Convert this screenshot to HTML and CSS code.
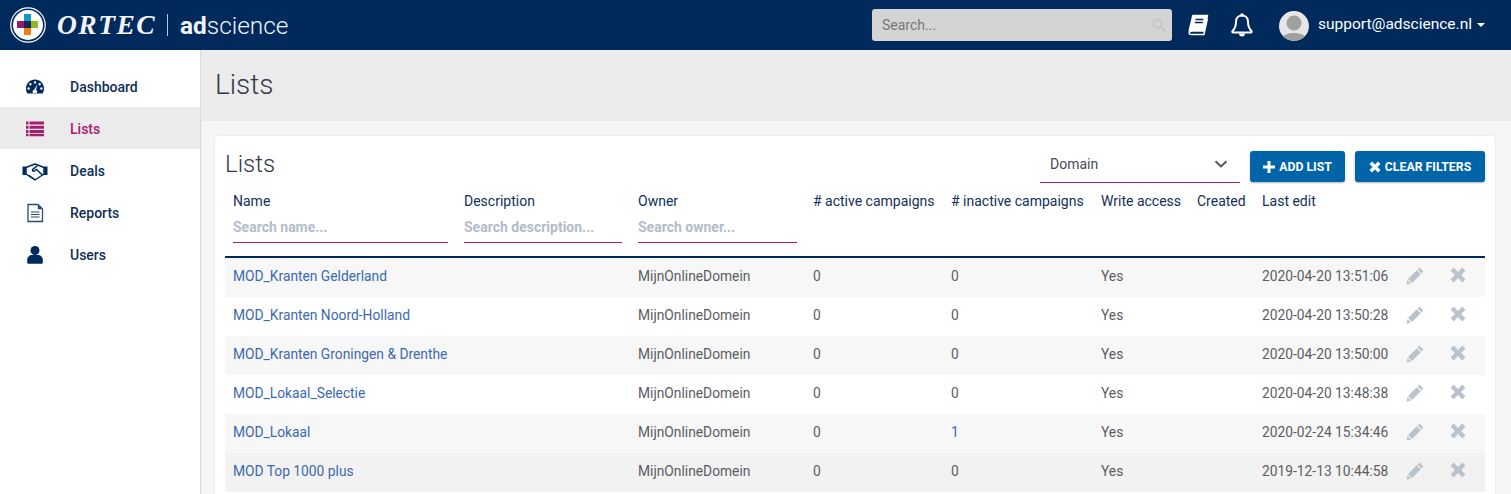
FILE: index.html
```html
<!DOCTYPE html>
<html lang="en">
<head>
<meta charset="utf-8">
<title>Lists</title>
<link rel="stylesheet" href="styles.css">
</head>
<body>
<svg class="sprites" aria-hidden="true">
  <symbol id="i-pencil" viewBox="0 0 18 18"><path d="M12.700 1.500l3.800 3.800-1.700 1.700L11 3.200zM10.200 4l3.800 3.800-8.300 8.300-3.800-3.800z" fill="#b9c3cb"/><path d="M1.400 13.200l3.400 3.400-4.300 1z" fill="#b9c3cb"/></symbol>
  <symbol id="i-cross" viewBox="0 0 14 14"><path d="M.5 3.200 3.200.5 7 4.300 10.800.5l2.700 2.700L9.700 7l3.800 3.800-2.700 2.700L7 9.700l-3.800 3.800-2.700-2.700L4.300 7z" fill="#b9c3cb"/></symbol>
</svg>
<header class="topbar">
  <div class="brand">
    <svg class="brand-mark" viewBox="0 0 36 36" width="36" height="36" aria-hidden="true">
      <circle cx="18" cy="18" r="17.200" fill="none" stroke="#fff" stroke-width="1.200"/>
      <circle cx="18" cy="18" r="15" fill="#fff"/>
      <rect x="14" y="7" width="7" height="7" fill="#1797c4"/>
      <rect x="7" y="14" width="7" height="7" fill="#9b1a70"/>
      <rect x="14" y="14" width="7" height="7" fill="#0d2a55"/>
      <rect x="21" y="14" width="7" height="7" fill="#8fb81c"/>
      <rect x="14" y="21" width="7" height="7" fill="#ee7d14"/>
    </svg>
    <span class="brand-ortec">ORTEC</span>
    <span class="brand-sep"></span>
    <span class="brand-ad">ad</span><span class="brand-science">science</span>
  </div>
  <div class="top-right">
    <div class="top-search">
      <span class="top-search-text">Search...</span>
      <svg viewBox="0 0 16 16" width="14" height="14" aria-hidden="true"><circle cx="6.500" cy="6.500" r="4.800" fill="none" stroke="#c4c4c4" stroke-width="2"/><path d="M10 10l4.600 4.600" stroke="#c4c4c4" stroke-width="2.400" stroke-linecap="round"/></svg>
    </div>
    <svg class="icon-book" viewBox="0 0 24 24" width="24" height="24" aria-hidden="true">
      <path d="M7 2.500h14.500l-3.400 15.500H6.200c-1.900 0-2.700 1.100-2.900 2" fill="#fff"/>
      <path d="M7 2.500h14.500L18.100 18H6.200C4 18 2.600 19.500 3.400 20.800c.4.600 1.100.800 2 .800h12.500l3.300-15" fill="none" stroke="#fff" stroke-width="1.500" stroke-linejoin="round" stroke-linecap="round"/>
      <path d="M7 2.500 3.200 18.500" stroke="#fff" stroke-width="1.800"/>
      <path d="M9.500 6.500h8M8.800 9.500h8" stroke="#002a5c" stroke-width="1.300"/>
    </svg>
    <svg class="icon-bell" viewBox="0 0 24 26" width="24" height="26" aria-hidden="true">
      <path d="M12 3.500c-3.600 0-6 2.700-6 6.200 0 5.200-1.600 7.400-3.500 9.300-.5.500-.2 1.500.6 1.500h17.800c.8 0 1.100-1 .6-1.500-1.900-1.900-3.500-4.100-3.500-9.300 0-3.500-2.400-6.200-6-6.200z" fill="none" stroke="#fff" stroke-width="2"/>
      <circle cx="12" cy="3" r="1.800" fill="#fff"/>
      <path d="M9 21.500a3 3 0 0 0 6 0z" fill="#fff"/>
    </svg>
    <svg class="avatar" viewBox="0 0 30 30" width="30" height="30" aria-hidden="true">
      <defs><clipPath id="avatar-clip"><circle cx="15" cy="15" r="15"/></clipPath></defs>
      <g clip-path="url(#avatar-clip)">
        <rect width="30" height="30" fill="#e6e6e6"/>
        <circle cx="15" cy="12" r="7.500" fill="#a0a0a0"/>
        <path d="M2 30c1-6 6-8 13-8s12 2 13 8z" fill="#a0a0a0"/>
      </g>
    </svg>
    <span class="user">support@adscience.nl</span>
    <span class="caret"></span>
  </div>
</header>
<div class="shell">
  <nav class="sidebar">
    <a class="nav-item">
      <svg class="nav-icon" viewBox="0 0 20 20" width="20" height="20" aria-hidden="true"><path fill-rule="evenodd" d="M10 2.500C4.800 2.500 1 6.600 1 11.600c0 1.800.5 3.400 1.200 4.700.2.300.5.300.7.300h14.200c.3 0 .6-.1.700-.4.700-1.300 1.200-2.900 1.200-4.600 0-5-3.800-9.100-9-9.100zM10 4.200a1.200 1.200 0 1 1 0 2.400 1.200 1.200 0 0 1 0-2.400zM5.400 6a1.200 1.200 0 1 1 0 2.400 1.200 1.200 0 0 1 0-2.400zM3.600 10.300a1.200 1.200 0 1 1 0 2.400 1.200 1.200 0 0 1 0-2.400zM14.600 6a1.200 1.200 0 1 1 0 2.400 1.200 1.200 0 0 1 0-2.400zM16.400 10.300a1.200 1.200 0 1 1 0 2.400 1.200 1.200 0 0 1 0-2.400zM12.300 7.200l-1.300 5.900a2.100 2.100 0 1 1-1.800-.3z"/></svg>
      <span>Dashboard</span>
    </a>
    <a class="nav-item is-active">
      <svg class="nav-icon" viewBox="0 0 20 20" width="20" height="20" aria-hidden="true"><path d="M1 2.500h2.500v3H1zM4.500 2.500H19v3H4.500zM1 6.700h2.500v3H1zM4.500 6.700H19v3H4.500zM1 10.900h2.500v3H1zM4.500 10.900H19v3H4.500zM1 14.800h2.500v2.500H1zM4.500 14.800H19v2.500H4.500z"/></svg>
      <span>Lists</span>
    </a>
    <a class="nav-item">
      <svg class="nav-icon nav-icon-wide" viewBox="0 0 26 20" width="26" height="20" aria-hidden="true"><path d="M.5 5.500h3.400v8.500H.5zM22.100 5.500h3.400v8.500h-3.400z"/><path d="M4 6.500 9 4.500 13 3l4 1.500 5 2v6.500l-9 6-9-6z" fill="#fff" stroke="#002a5c" stroke-width="1.500" stroke-linejoin="round"/><path d="M15 5 10.800 8.400c-1 1 .6 2.400 1.700 1.600l2-1.500 5.600 5.200M7 14.500l5 3.500" fill="none" stroke="#002a5c" stroke-width="1.500" stroke-linecap="round"/></svg>
      <span>Deals</span>
    </a>
    <a class="nav-item">
      <svg class="nav-icon" viewBox="0 0 20 20" width="20" height="20" aria-hidden="true"><path d="M3 1.500h10l4.500 4.500v12.500H3z" fill="none" stroke="#2b4a78" stroke-width="1.300"/><path d="M12.800 1.500v4.700h4.700z" fill="#2b4a78"/><path d="M6 9h8.500M6 11.500h8.500M6 14h8.500" stroke="#2b4a78" stroke-width="1.200"/></svg>
      <span>Reports</span>
    </a>
    <a class="nav-item">
      <svg class="nav-icon" viewBox="0 0 20 20" width="20" height="20" aria-hidden="true"><circle cx="10" cy="5.500" r="4.500"/><path d="M3.500 18.800c-.8 0-1.300-.5-1.300-1.300v-2.500c0-3 2.200-5 4.800-5h6c2.600 0 4.800 2 4.800 5v2.500c0 .8-.5 1.300-1.300 1.300z"/></svg>
      <span>Users</span>
    </a>
  </nav>
  <main class="main">
    <div class="page-head"><h1>Lists</h1></div>
    <section class="card">
      <div class="card-head">
        <h2>Lists</h2>
        <div class="card-tools">
          <div class="select">
            <span>Domain</span>
            <svg viewBox="0 0 14 8" width="14" height="8" aria-hidden="true"><path d="M1.500 1.200 7 6.500l5.500-5.300" fill="none" stroke="#555" stroke-width="1.900"/></svg>
          </div>
          <button class="btn btn-add" type="button"><svg viewBox="0 0 12 12" width="12" height="12" aria-hidden="true"><path d="M4.500 0h3v4.500H12v3H7.500V12h-3V7.500H0v-3h4.500z" fill="#fff"/></svg>ADD LIST</button>
          <button class="btn btn-clear" type="button"><svg viewBox="0 0 12 12" width="12" height="12" aria-hidden="true"><path d="M.5 3 3 .5l3 3 3-3L11.500 3l-3 3 3 3L9 11.500l-3-3-3 3L.5 9l3-3z" fill="#fff"/></svg>CLEAR FILTERS</button>
        </div>
      </div>
      <table class="grid">
        <colgroup>
          <col class="c-name"><col class="c-desc"><col class="c-owner"><col class="c-active"><col class="c-inactive"><col class="c-write"><col class="c-created"><col class="c-edit"><col class="c-act"><col class="c-act">
        </colgroup>
        <thead>
          <tr>
            <th>Name<div class="filter">Search name...</div></th>
            <th>Description<div class="filter">Search description...</div></th>
            <th>Owner<div class="filter">Search owner...</div></th>
            <th># active campaigns</th>
            <th># inactive campaigns</th>
            <th>Write access</th>
            <th>Created</th>
            <th>Last edit</th>
            <th></th>
            <th></th>
          </tr>
        </thead>
        <tbody>
          <tr><td class="link">MOD_Kranten Gelderland</td><td></td><td>MijnOnlineDomein</td><td>0</td><td>0</td><td>Yes</td><td></td><td>2020-04-20 13:51:06</td><td class="act"><svg class="ic-pencil"><use href="#i-pencil"/></svg></td><td class="act"><svg class="ic-cross"><use href="#i-cross"/></svg></td></tr>
          <tr><td class="link">MOD_Kranten Noord-Holland</td><td></td><td>MijnOnlineDomein</td><td>0</td><td>0</td><td>Yes</td><td></td><td>2020-04-20 13:50:28</td><td class="act"><svg class="ic-pencil"><use href="#i-pencil"/></svg></td><td class="act"><svg class="ic-cross"><use href="#i-cross"/></svg></td></tr>
          <tr><td class="link">MOD_Kranten Groningen &amp; Drenthe</td><td></td><td>MijnOnlineDomein</td><td>0</td><td>0</td><td>Yes</td><td></td><td>2020-04-20 13:50:00</td><td class="act"><svg class="ic-pencil"><use href="#i-pencil"/></svg></td><td class="act"><svg class="ic-cross"><use href="#i-cross"/></svg></td></tr>
          <tr><td class="link">MOD_Lokaal_Selectie</td><td></td><td>MijnOnlineDomein</td><td>0</td><td>0</td><td>Yes</td><td></td><td>2020-04-20 13:48:38</td><td class="act"><svg class="ic-pencil"><use href="#i-pencil"/></svg></td><td class="act"><svg class="ic-cross"><use href="#i-cross"/></svg></td></tr>
          <tr><td class="link">MOD_Lokaal</td><td></td><td>MijnOnlineDomein</td><td>0</td><td class="count-link">1</td><td>Yes</td><td></td><td>2020-02-24 15:34:46</td><td class="act"><svg class="ic-pencil"><use href="#i-pencil"/></svg></td><td class="act"><svg class="ic-cross"><use href="#i-cross"/></svg></td></tr>
          <tr><td class="link">MOD Top 1000 plus</td><td></td><td>MijnOnlineDomein</td><td>0</td><td>0</td><td>Yes</td><td></td><td>2019-12-13 10:44:58</td><td class="act"><svg class="ic-pencil"><use href="#i-pencil"/></svg></td><td class="act"><svg class="ic-cross"><use href="#i-cross"/></svg></td></tr>
        </tbody>
      </table>
    </section>
  </main>
</div>
</body>
</html>
```

FILE: styles.css
```css
* { box-sizing: border-box; }
html, body { margin: 0; height: 100%; overflow: hidden; }
body { font-family: Roboto, "Liberation Sans", sans-serif; font-size: 14px; color: #4a4a55; background: #f5f5f5; }
.sprites { display: none; }

.topbar { height: 50px; background: #002a5c; display: flex; align-items: center; justify-content: space-between; padding: 0 0 0 10px; }
.brand { display: flex; align-items: center; color: #f2f4f7; }
.brand-mark { display: block; }
.brand-ortec { font-family: "Liberation Serif", serif; font-weight: 700; font-style: italic; font-size: 27.500px; letter-spacing: 1.500px; margin-left: 11px; width: 99px; }
.brand-sep { width: 1px; height: 22px; background: #b8c4d4; margin: 0 12px 0 11px; }
.brand-ad { font-size: 24.400px; font-weight: 700; }
.brand-science { font-size: 24.400px; font-weight: 300; }

.top-right { display: flex; align-items: center; height: 50px; }
.top-search { width: 300px; height: 32px; margin: 0; background: #d4d4d4; border-radius: 3px; display: flex; align-items: center; justify-content: space-between; padding: 0 6px 0 10px; }
.top-search-text { font-size: 14px; color: #777; }
.icon-book { margin-left: 14px; }
.icon-bell { margin-left: 20px; }
.avatar { margin-left: 25px; margin-top: 1px; }
.user { font-size: 15.500px; color: #fff; margin-left: 9px; margin-top: -3px; }
.caret { width: 0; height: 0; border-left: 4px solid transparent; border-right: 4px solid transparent; border-top: 4px solid #fff; margin: 0 26px 0 5px; }

.shell { display: flex; height: 444px; }
.sidebar { width: 201px; flex: none; background: #fff; border-right: 1px solid #d8d8d8; padding-top: 15px; }
.nav-item { height: 42px; display: flex; align-items: center; font-size: 14px; font-weight: 500; color: #0f2f57; padding: 2px 0 0 25px; }
.nav-item span { margin-left: 25px; }
.nav-icon { fill: #002a5c; flex: none; }
.nav-icon-wide { margin-left: -3px; margin-right: -3px; }
.nav-item.is-active { background: #ebebeb; color: #a3206f; }
.nav-item.is-active .nav-icon { fill: #a3206f; }

.main { flex: 1; min-width: 0; }
.page-head { height: 71px; background: #ebebeb; padding: 0 0 0 14px; display: flex; align-items: center; }
h1 { margin: 0 0 3px; font-size: 28px; font-weight: 300; color: #33394a; }
.card { margin: 15px 16px 0 14px; background: #fff; border-radius: 3px; padding: 0 10px; height: 400px; box-shadow: 0 0 2px rgba(0,0,0,.12); }
.card-head { display: flex; justify-content: space-between; height: 48px; padding-top: 14px; }
h2 { margin: 0; font-size: 24px; font-weight: 300; color: #33394a; line-height: 28px; }
.card-tools { display: flex; align-items: flex-start; margin-top: 1px; }
.select { width: 200px; height: 32px; border-bottom: 1px solid #a3206f; display: flex; align-items: center; justify-content: space-between; padding: 0 12px 5px 10px; font-size: 14px; color: #4a4a55; }
.btn { height: 31px; border: 0; border-radius: 3px; background: #0064a8; color: #fff; font-family: inherit; font-size: 12.300px; font-weight: 700; display: flex; align-items: center; justify-content: center; box-shadow: 0 1px 2px rgba(0,0,0,.3); padding: 0; }
.btn svg { margin-right: 4px; }
.btn-add { width: 95px; margin-left: 10px; }
.btn-clear { width: 130px; margin-left: 10px; }

.grid { width: 1260px; border-collapse: separate; border-spacing: 0; table-layout: fixed; }
.c-name { width: 231px; } .c-desc { width: 174px; } .c-owner { width: 175px; } .c-active { width: 138px; }
.c-inactive { width: 150px; } .c-write { width: 96px; } .c-created { width: 65px; } .c-edit { width: 143px; } .c-act { width: 44px; }
th { height: 74px; padding: 9px 8px 0; text-align: left; vertical-align: top; font-weight: 400; font-size: 14px; color: #12305a; border-bottom: 2px solid #002a5c; white-space: nowrap; }
.filter { margin-top: 9px; height: 25px; border-bottom: 1px solid #a3206f; color: #b2bccb; font-weight: 700; font-size: 14px; line-height: 18px; }
td { height: 39px; padding: 0 8px 3px; font-size: 13.800px; color: #5c5c62; white-space: nowrap; vertical-align: middle; }
tbody tr:nth-child(odd) { background: #f7f7f7; }
tbody tr:nth-child(6) { background: #f2f2f2; }
.link { color: #3a6aae; }
.count-link { color: #3a6aae; }
.act { padding-bottom: 5px; }
.act svg { display: block; }
.ic-pencil { width: 19px; height: 19px; margin-left: 1px; }
.ic-cross { width: 16px; height: 16px; margin-left: 1px; }
```
